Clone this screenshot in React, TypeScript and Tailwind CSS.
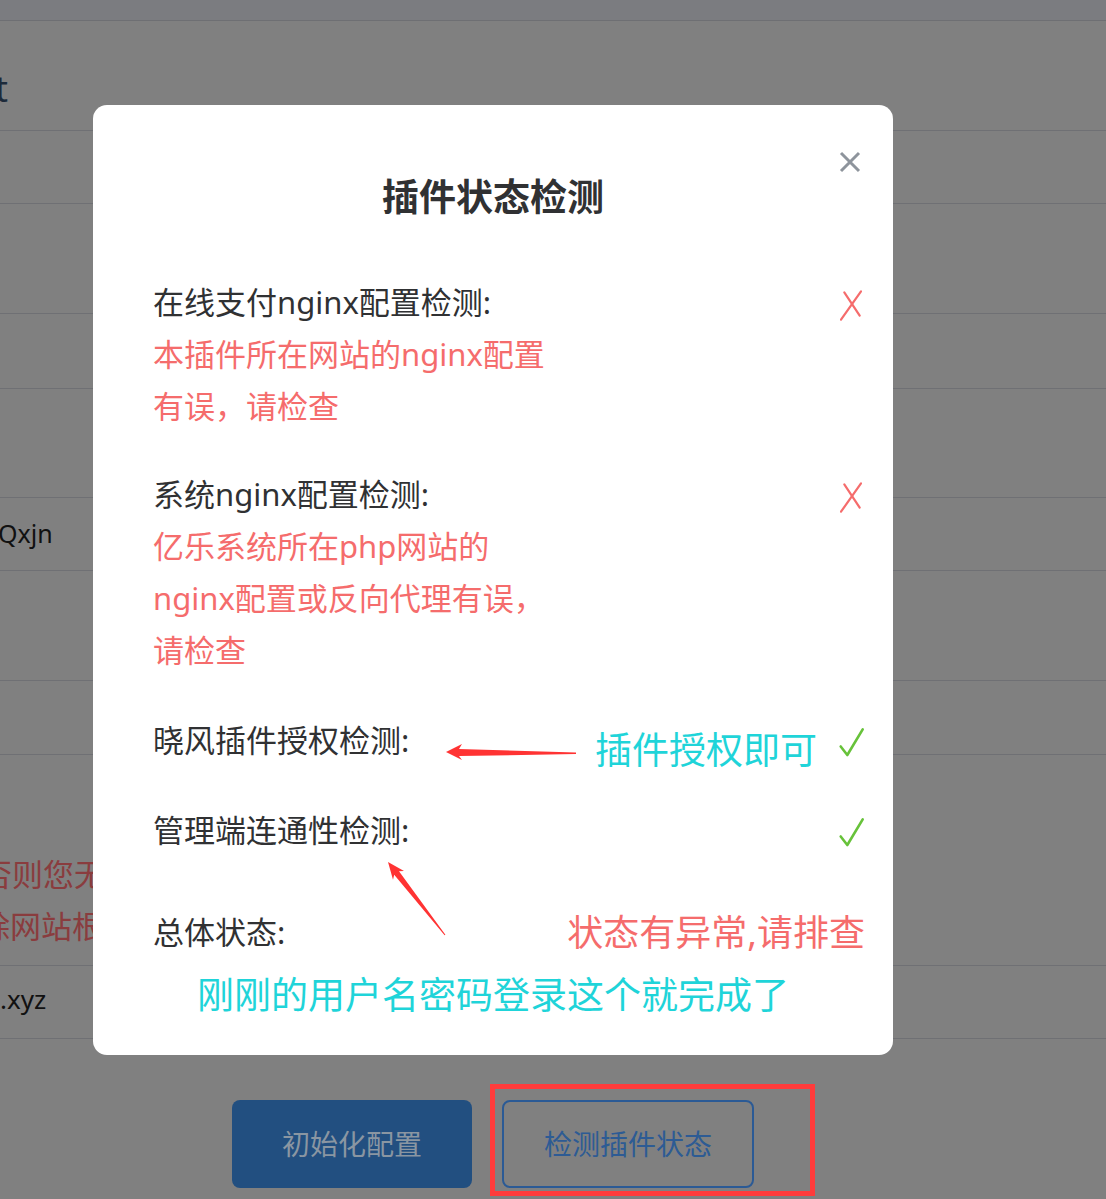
import React from "react";

const rows = [
  { h: "h-[110px]", content: <span className="-ml-[5px] block pt-[48px] text-[36px] leading-[40px] text-[#1c2a3a]">t</span> },
  { h: "h-[73px]" },
  { h: "h-[110px]" },
  { h: "h-[75px]" },
  { h: "h-[109px]" },
  { h: "h-[73px]", content: <span className="-ml-[2px] block pt-[20px] text-[25px] leading-[30px] text-[#111]">Qxjn</span> },
  { h: "h-[110px]" },
  { h: "h-[74px]" },
  {
    h: "h-[211px]",
    content: (
      <div className="pt-[93px] text-[31px] leading-[52px] text-[#8a3c3e]">
        <div className="-ml-[19px] whitespace-nowrap">否则您无法访问</div>
        <div className="-ml-[21px] whitespace-nowrap">除网站根目录</div>
      </div>
    ),
  },
  { h: "h-[73px]", content: <span className="block pt-[18px] text-[26px] leading-[30px] text-[#111]">.xyz</span> },
];

function XMark({ className = "" }: { className?: string }) {
  return (
    <svg width="22" height="33" viewBox="0 0 22 33" className={className}>
      <path d="M1 30.7 L21 2.3" stroke="#f56c6c" strokeWidth="2.2" strokeLinecap="round" fill="none" />
      <path d="M4.3 3.3 L19.7 26.7" stroke="#f56c6c" strokeWidth="2.2" strokeLinecap="round" fill="none" />
    </svg>
  );
}

function Check({ className = "" }: { className?: string }) {
  return (
    <svg width="27" height="33" viewBox="0 0 27 33" className={className}>
      <path
        d="M2.7 19.5 L9.3 28 L24.7 2.3"
        stroke="#67c23a"
        strokeWidth="2.6"
        strokeLinecap="round"
        strokeLinejoin="round"
        fill="none"
      />
    </svg>
  );
}

export default function App() {
  return (
    <div className="relative h-[1199px] w-full overflow-hidden bg-[#808080] font-['Noto_Sans','Noto_Sans_CJK_SC',sans-serif]">
      {/* page behind the dimmed overlay */}
      <div className="h-[21px] border-b border-[#6e6f73] bg-[#7b7c80]" />
      {rows.map((r, i) => (
        <div key={i} className={`${r.h} border-b border-[#6f7074] overflow-hidden`}>
          {r.content}
        </div>
      ))}

      <div className="mt-[61px] flex gap-[30px] pl-[232px]">
        <button className="flex h-[88px] w-[240px] items-center justify-center rounded-[8px] bg-[#224f80] text-[28px] text-[#8a96a2]">
          初始化配置
        </button>
        <button className="flex h-[88px] w-[252px] items-center justify-center rounded-[8px] border-2 border-[#2b5a95] text-[28px] text-[#2d5b94]">
          检测插件状态
        </button>
      </div>

      {/* red annotation box */}
      <div className="pointer-events-none absolute left-[490px] top-[1084px] h-[112px] w-[325px] border-[5px] border-[#ff3b3b]" />

      {/* modal */}
      <div className="absolute left-[93px] top-[105px] w-[800px] rounded-[14px] bg-white pb-[35px] pl-[60px] pr-[28px] pt-[67px]">
        <button className="absolute right-[32px] top-[46px]">
          <svg width="22" height="22" viewBox="0 0 22 22">
            <path d="M2 2 L20 20 M20 2 L2 20" stroke="#8e949c" strokeWidth="3" fill="none" />
          </svg>
        </button>

        <h2 className="mr-[32px] text-center text-[37px] font-bold leading-[50px] text-[#303133]">插件状态检测</h2>

        <div className="mt-[55px] flex items-start justify-between">
          <div>
            <div className="text-[31px] leading-[51px] text-[#303133]">在线支付nginx配置检测:</div>
            <div className="text-[31px] leading-[52px] text-[#f56c6c]">
              <div>本插件所在网站的nginx配置</div>
              <div>有误，请检查</div>
            </div>
          </div>
          <XMark className="mr-[3px] mt-[12px]" />
        </div>

        <div className="mt-[37px] flex items-start justify-between">
          <div>
            <div className="text-[31px] leading-[51px] text-[#303133]">系统nginx配置检测:</div>
            <div className="text-[31px] leading-[52px] text-[#f56c6c]">
              <div>亿乐系统所在php网站的</div>
              <div>nginx配置或反向代理有误，</div>
              <div>请检查</div>
            </div>
          </div>
          <XMark className="mr-[3px] mt-[12px]" />
        </div>

        <div className="mt-[39px] flex items-start justify-between">
          <div className="text-[31px] leading-[51px] text-[#303133]">晓风插件授权检测:</div>
          <Check className="mt-[12px]" />
        </div>

        <div className="mt-[39px] flex items-start justify-between">
          <div className="text-[31px] leading-[51px] text-[#303133]">管理端连通性检测:</div>
          <Check className="mt-[12px]" />
        </div>

        <div className="mt-[51px] flex items-center justify-between">
          <div className="text-[31px] leading-[51px] text-[#303133]">总体状态:</div>
          <div className="text-[36px] leading-[51px] text-[#f56c6c]">状态有异常,请排查</div>
        </div>

        <div className="mr-[32px] mt-[11px] text-center text-[37px] leading-[51px] text-[#1fd4d9]">
          刚刚的用户名密码登录这个就完成了
        </div>

        {/* annotations drawn over the dialog */}
        <div className="pointer-events-none absolute left-[502px] top-[622px] whitespace-nowrap text-[37px] leading-[46px] text-[#1fd4d9]">
          插件授权即可
        </div>
        <svg className="pointer-events-none absolute left-0 top-0" width="800" height="951" viewBox="0 0 800 951">
          <polygon points="353,647 369,639 366,644 483,647.5 483,649 366,651 369,655" fill="#ff3333" />
          <polygon points="295,757 311,766.1 306,766.2 352.4,829.7 351.6,830.3 301.2,769.8 300,774.7" fill="#ff3333" />
        </svg>
      </div>
    </div>
  );
}
